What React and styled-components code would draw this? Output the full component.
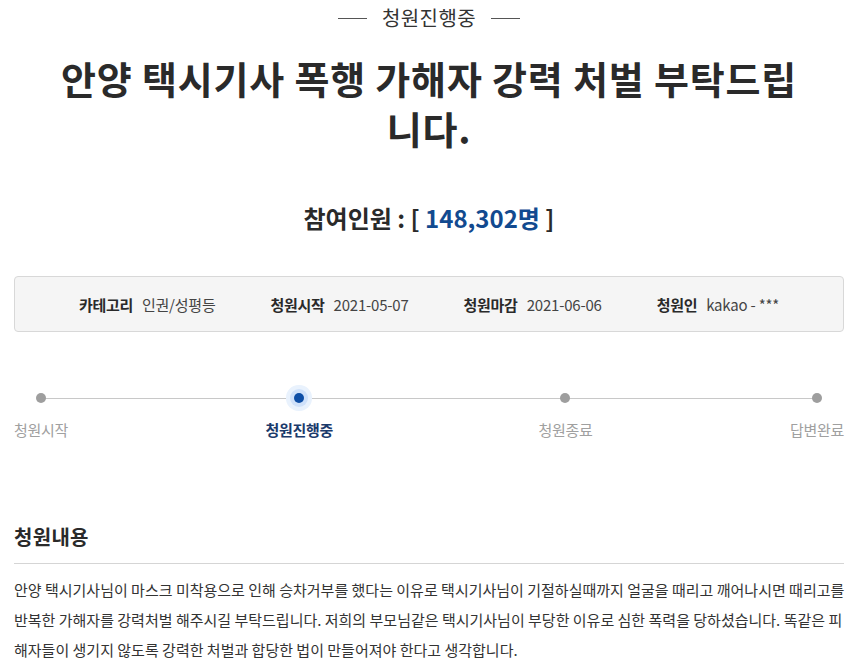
import React from 'react'
import styled, { createGlobalStyle } from 'styled-components'

const GlobalStyle = createGlobalStyle`
    body {
        margin: 0;
        background: #fff;
        font-family: "Noto Sans CJK KR", "Noto Sans", sans-serif;
        color: #333;
    }
`

const Page = styled.div`
    width: 861px;
    padding: 6px 17px 0 14px;
    box-sizing: border-box;
`

const Status = styled.div`
    display: flex;
    justify-content: center;
    align-items: center;
    gap: 15px;
    font-size: 20px;
    line-height: 24px;
    color: #333;
    letter-spacing: 0.4px;

    &::before, &::after {
        content: '';
        width: 29px;
        height: 1px;
        background: #555;
    }
`

const Title = styled.h1`
    margin: 23px 0 0;
    text-align: center;
    font-size: 38px;
    line-height: 50px;
    font-weight: 700;
    letter-spacing: 0.8px;
    color: #2a2a2a;
`

const Count = styled.div`
    margin-top: 49px;
    text-align: center;
    font-size: 24px;
    line-height: 32px;
    font-weight: 700;
    letter-spacing: 0;
    color: #2a2a2a;
`

const CountNum = styled.span`
    color: #124a8f;
`

const InfoBox = styled.div`
    margin-top: 42px;
    height: 56px;
    box-sizing: border-box;
    border: 1px solid #d8d8d8;
    border-radius: 4px;
    background: #f5f5f5;
    display: flex;
    justify-content: center;
    align-items: center;
    gap: 55px;
`

const InfoItem = styled.div`
    display: flex;
    align-items: center;
    gap: 9px;
    font-size: 15px;
`

const InfoLabel = styled.span`
    font-weight: 700;
    letter-spacing: -0.3px;
    color: #2a2a2a;
`

const InfoValue = styled.span`
    letter-spacing: -0.2px;
    color: #444;
`

const Steps = styled.div`
    position: relative;
    margin-top: 53px;
    display: flex;
    justify-content: space-between;

    &::before {
        content: '';
        position: absolute;
        top: 13px;
        left: 27px;
        right: 27px;
        height: 1px;
        background: #c8c8c8;
    }
`

const Step = styled.div`
    position: relative;
    display: flex;
    flex-direction: column;
    align-items: center;
    gap: 9px;
    margin-right: ${p => (p.$active ? '8px' : '0')};
`

const DotWrap = styled.div`
    width: 26px;
    height: 26px;
    display: flex;
    align-items: center;
    justify-content: center;
`

const Dot = styled.span`
    width: 10px;
    height: 10px;
    border-radius: 50%;
    background: ${p => (p.$active ? '#0d4ea6' : '#9e9e9e')};
    box-shadow: ${p => (p.$active ? '0 0 0 4px #cfe1fa, 0 0 0 8px #e9f2fd' : 'none')};
`

const StepLabel = styled.span`
    font-size: 15px;
    line-height: 20px;
    letter-spacing: -0.3px;
    font-weight: ${p => (p.$active ? 700 : 400)};
    color: ${p => (p.$active ? '#1b3a6b' : '#a0a0a0')};
`

const SectionTitle = styled.h2`
    margin: 83px 0 0;
    padding-bottom: 12px;
    border-bottom: 1px solid #d5d5d5;
    font-size: 20px;
    line-height: 28px;
    font-weight: 700;
    letter-spacing: 0.3px;
    color: #2a2a2a;
`

const Body = styled.p`
    margin: 11px 0 0;
    font-size: 15px;
    line-height: 30px;
    letter-spacing: 0;
    color: #333;
    white-space: nowrap;
`

const steps = [
    { label: '청원시작' },
    { label: '청원진행중', active: true },
    { label: '청원종료' },
    { label: '답변완료' },
]

const info = [
    ['카테고리', '인권/성평등'],
    ['청원시작', '2021-05-07'],
    ['청원마감', '2021-06-06'],
    ['청원인', 'kakao - ***'],
]

const App = () => {
    return (
        <Page>
            <GlobalStyle />
            <Status>청원진행중</Status>
            <Title>
                안양 택시기사 폭행 가해자 강력 처벌 부탁드립<br />니다.
            </Title>
            <Count>
                참여인원 : [ <CountNum>148,302명</CountNum> ]
            </Count>
            <InfoBox>
                {info.map(([label, value]) => (
                    <InfoItem key={label}>
                        <InfoLabel>{label}</InfoLabel>
                        <InfoValue>{value}</InfoValue>
                    </InfoItem>
                ))}
            </InfoBox>
            <Steps>
                {steps.map(s => (
                    <Step key={s.label} $active={s.active}>
                        <DotWrap>
                            <Dot $active={s.active} />
                        </DotWrap>
                        <StepLabel $active={s.active}>{s.label}</StepLabel>
                    </Step>
                ))}
            </Steps>
            <SectionTitle>청원내용</SectionTitle>
            <Body>
                안양 택시기사님이 마스크 미착용으로 인해 승차거부를 했다는 이유로 택시기사님이 기절하실때까지 얼굴을 때리고 깨어나시면 때리고를<br />
                반복한 가해자를 강력처벌 해주시길 부탁드립니다. 저희의 부모님같은 택시기사님이 부당한 이유로 심한 폭력을 당하셨습니다. 똑같은 피<br />
                해자들이 생기지 않도록 강력한 처벌과 합당한 법이 만들어져야 한다고 생각합니다.
            </Body>
        </Page>
    )
}

export default App
